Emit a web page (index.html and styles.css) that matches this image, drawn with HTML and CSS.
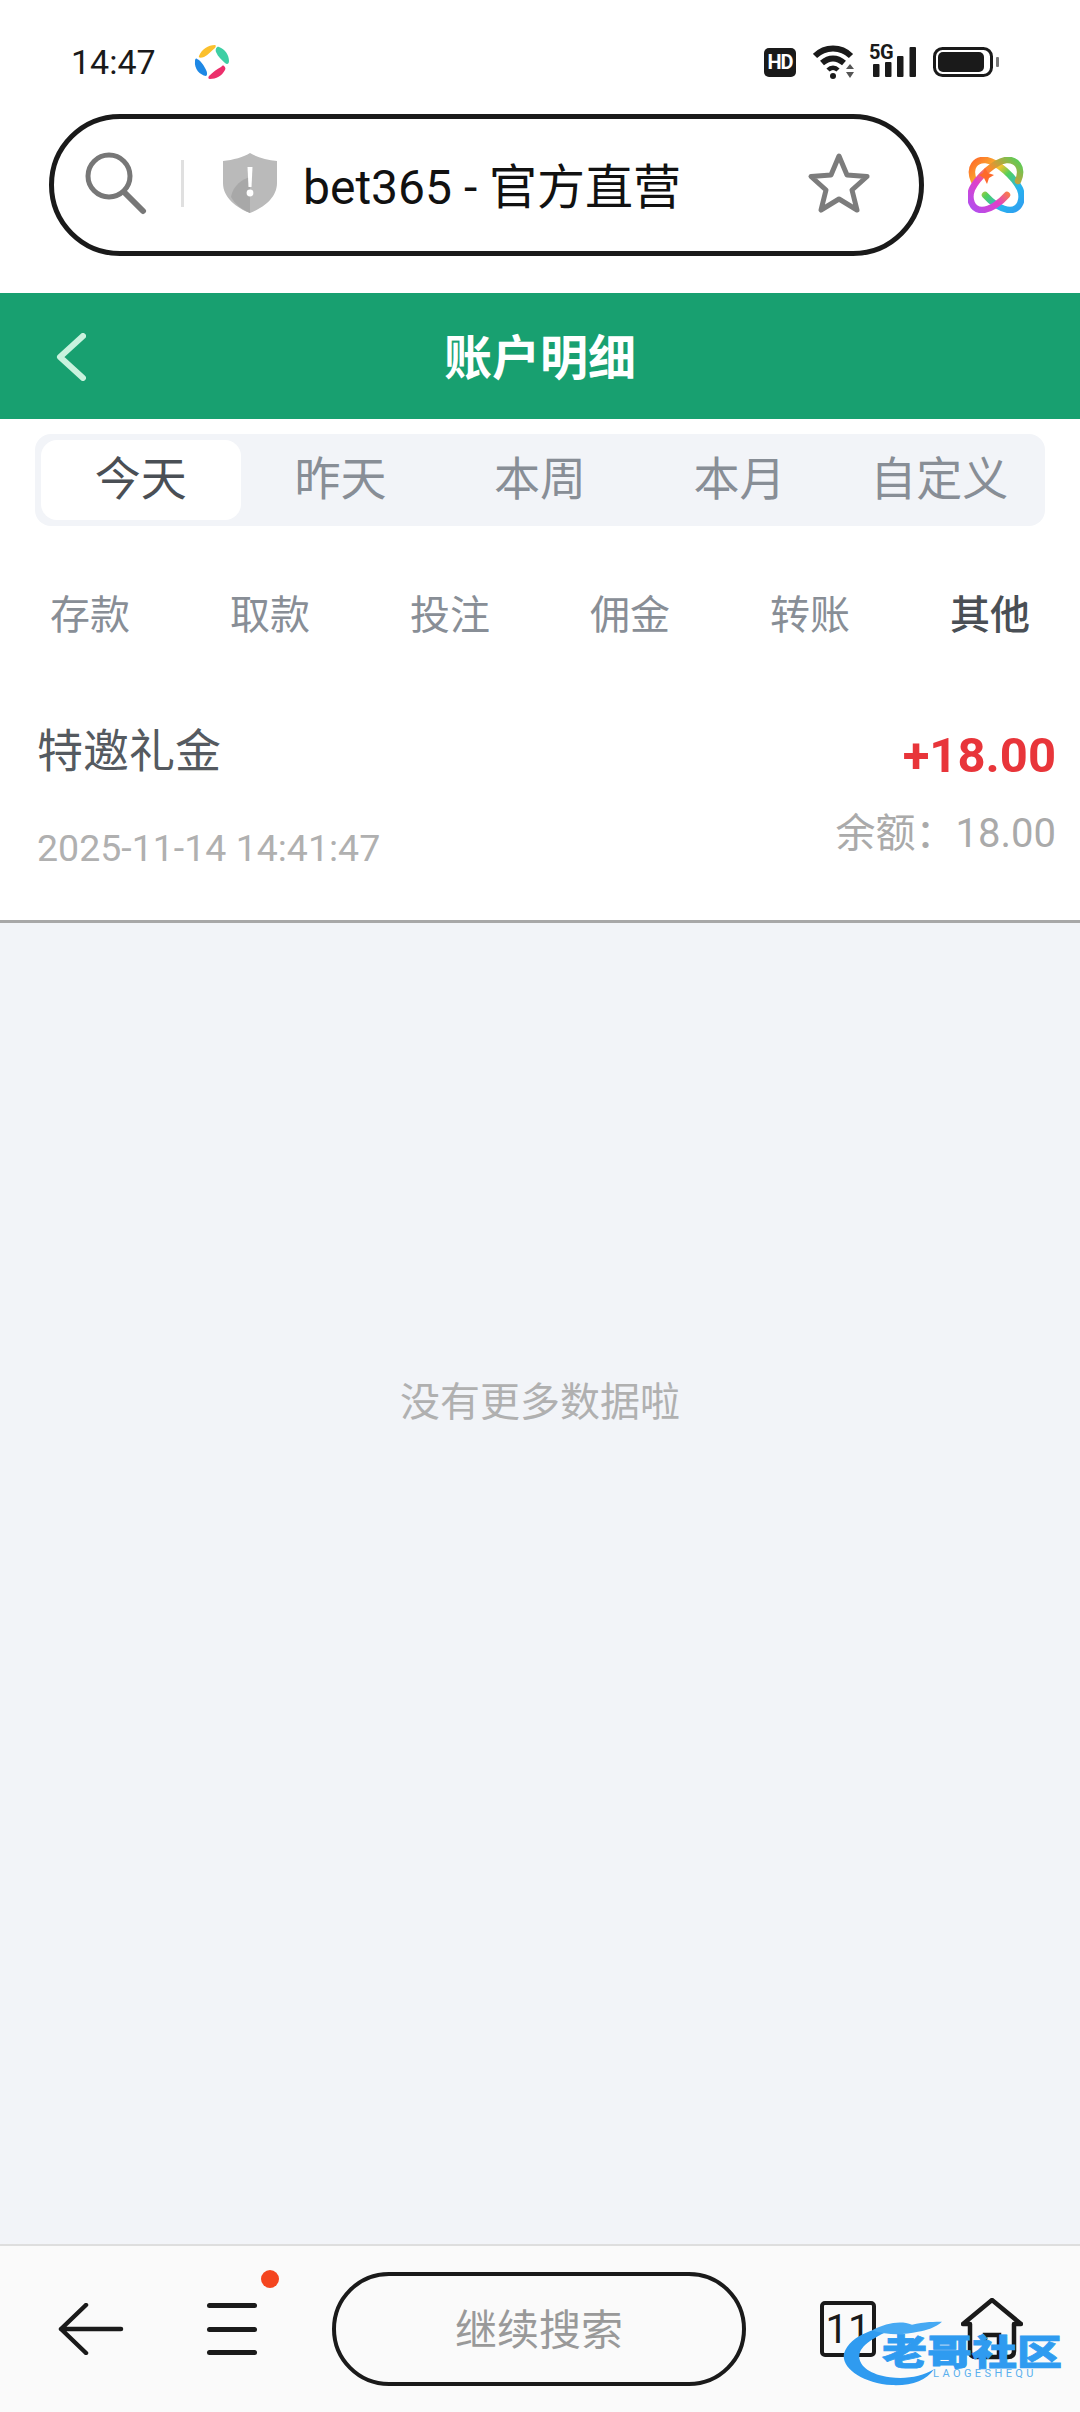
FILE: index.html
```html
<!DOCTYPE html>
<html lang="en">
<head>
    <meta charset="UTF-8">
    <meta name="viewport" content="width=device-width, initial-scale=1.0">
    <title>账户明细</title>
    <link rel="stylesheet" href="styles.css">
</head>
<body>

    <!-- Status Bar -->
    <div class="status-bar">
        <span class="time">14:47</span>
        <svg class="app-dot" viewBox="0 0 36 36">
            <path d="M5 12C8 5 14 1 21 1c1 0 1 2 0 3-4 3-7 7-11 9-3 1-6 1-5-1z" fill="#fbc02d"/>
            <path d="M25 3c6 2 10 8 10 14 0 3-2 4-4 2-3-3-7-6-9-11-1-3 1-6 3-5z" fill="#3ecfa4"/>
            <path d="M3 15c3 1 6 5 8 9 2 3 3 7 1 8C6 31 0 25 1 17c0-2 1-3 2-2z" fill="#1e88e5"/>
            <path d="M30 22c1 1 2 2 1 4-3 6-9 9-15 9-2 0-2-2-1-3 4-4 8-7 12-9 1-1 2-2 3-1z" fill="#ec2f6b"/>
        </svg>
        <div class="status-icons">
            <span class="hd">HD</span>
            <svg class="wifi" viewBox="0 0 44 34">
                <path d="M2 11C12 1 28 1 38 11" fill="none" stroke="#1a1a1a" stroke-width="6"/>
                <path d="M9 18c7-6 15-6 22 0" fill="none" stroke="#1a1a1a" stroke-width="6"/>
                <path d="M15 25c3-3 7-3 10 0" fill="none" stroke="#1a1a1a" stroke-width="4.500"/>
                <circle cx="20" cy="31" r="3" fill="#1a1a1a"/>
                <path d="M33 24l4-5 4 5zM33 27h8l-4 6z" fill="#555"/>
            </svg>
            <div class="signal">
                <span class="five-g">5G</span>
                <svg viewBox="0 0 43 30">
                    <rect x="0" y="17" width="6.500" height="13" rx="1"/>
                    <rect x="12" y="15" width="6.500" height="15" rx="1"/>
                    <rect x="24" y="9" width="6.500" height="21" rx="1"/>
                    <rect x="36.500" y="0" width="6.500" height="30" rx="1"/>
                </svg>
            </div>
            <svg class="battery" viewBox="0 0 66 30">
                <rect x="1.500" y="1.500" width="57" height="27" rx="8" fill="none" stroke="#1a1a1a" stroke-width="3"/>
                <rect x="5" y="5" width="46" height="20" rx="5" fill="#1a1a1a"/>
                <rect x="63" y="10" width="3" height="10" rx="1" fill="#777"/>
            </svg>
        </div>
    </div>

    <!-- Browser Address Bar -->
    <div class="browser-bar">
        <div class="address">
            <svg class="search-icon" viewBox="0 0 64 64">
                <circle cx="26" cy="25" r="21" fill="none" stroke="#777" stroke-width="5"/>
                <path d="M41 41L60 60" stroke="#777" stroke-width="6" stroke-linecap="round"/>
            </svg>
            <span class="address-sep"></span>
            <svg class="shield" viewBox="0 0 54 60">
                <path d="M27 0C33 4 44 7 54 8V30C54 45 40 55 27 60 14 55 0 45 0 30V8C10 7 21 4 27 0z" fill="#bababa"/>
                <path d="M8 44C10 32 20 26 27 24V60C18 56 12 51 8 44z" fill="#a8a8a8"/>
                <path d="M24.500 14h5l-1 20h-3z" fill="#fff"/>
                <circle cx="27" cy="40" r="3.400" fill="#fff"/>
            </svg>
            <span class="address-text">bet365 - 官方直营</span>
            <svg class="star" viewBox="0 0 64 62">
                <path d="M32 4L40 23 60 24.500 45 38 50 58 32 47 14 58 19 38 4 24.500 24 23z" fill="none" stroke="#7c7c7c" stroke-width="5" stroke-linejoin="round"/>
            </svg>
        </div>
        <svg class="orbit" viewBox="0 0 56 56">
            <defs>
                <linearGradient id="orbitGrad" x1="0" y1="0" x2="1" y2="1">
                    <stop offset="0" stop-color="#ff6a2b"/>
                    <stop offset="0.35" stop-color="#f7c32e"/>
                    <stop offset="0.5" stop-color="#52d05a"/>
                    <stop offset="0.75" stop-color="#27b4ee"/>
                    <stop offset="1" stop-color="#2f9df0"/>
                </linearGradient>
                <linearGradient id="orbitGrad2" x1="0" y1="1" x2="1" y2="0">
                    <stop offset="0" stop-color="#b050f0"/>
                    <stop offset="0.35" stop-color="#e040c8"/>
                    <stop offset="0.6" stop-color="#ff8a2b"/>
                    <stop offset="1" stop-color="#52d05a"/>
                </linearGradient>
            </defs>
            <path d="M6 24C0 10 8 2 18 3 30 5 46 20 52 32 56 42 52 53 42 53 34 53 24 46 17 38" fill="none" stroke="url(#orbitGrad)" stroke-width="6.500" stroke-linecap="round"/>
            <path d="M50 24C56 10 48 2 38 3 26 5 10 20 4 32 0 42 4 53 14 53 22 53 32 46 39 38" fill="none" stroke="url(#orbitGrad2)" stroke-width="6.500" stroke-linecap="round"/>
            <path d="M17 11L20 16 26 18 21 21 19 27 16 21 11 18 15 16z" fill="#ff6a2b"/>
        </svg>
    </div>

    <!-- Page Header -->
    <header class="page-header">
        <svg class="back-chevron" viewBox="0 0 30 48">
            <path d="M27 3L4 24 27 45" fill="none" stroke="#c9f2de" stroke-width="6" stroke-linecap="round" stroke-linejoin="round"/>
        </svg>
        <h1>账户明细</h1>
    </header>

    <!-- Date Range -->
    <div class="range-tabs">
        <div class="range-tab active">今天</div>
        <div class="range-tab">昨天</div>
        <div class="range-tab">本周</div>
        <div class="range-tab">本月</div>
        <div class="range-tab">自定义</div>
    </div>

    <!-- Type Filter -->
    <div class="type-tabs">
        <div class="type-tab">存款</div>
        <div class="type-tab">取款</div>
        <div class="type-tab">投注</div>
        <div class="type-tab">佣金</div>
        <div class="type-tab">转账</div>
        <div class="type-tab active">其他</div>
    </div>

    <!-- Record -->
    <div class="record">
        <div class="record-left">
            <div class="record-title">特邀礼金</div>
            <div class="record-date">2025-11-14 14:41:47</div>
        </div>
        <div class="record-right">
            <div class="record-amount">+18.00</div>
            <div class="record-balance">余额：18.00</div>
        </div>
    </div>

    <main class="empty-area">
        <p>没有更多数据啦</p>
    </main>

    <!-- Browser Bottom Bar -->
    <nav class="bottom-bar">
        <svg class="nav-back" viewBox="0 0 66 52">
            <path d="M28 2L3 26 28 50M3 26H63" fill="none" stroke="#1a1a1a" stroke-width="4.500" stroke-linecap="round" stroke-linejoin="round"/>
        </svg>
        <div class="nav-menu">
            <span></span>
            <span></span>
            <span></span>
            <i class="menu-dot"></i>
        </div>
        <div class="continue-pill">继续搜索</div>
        <div class="tab-count">11</div>
        <svg class="nav-home" viewBox="0 0 62 62">
            <path d="M2 26L31 2 60 26H53V53Q53 59 47 59H15Q9 59 9 53V26z" fill="none" stroke="#1a1a1a" stroke-width="4.500" stroke-linejoin="round"/>
            <path d="M24 59V37H38V59" fill="none" stroke="#1a1a1a" stroke-width="4.500"/>
        </svg>
    </nav>

    <!-- Watermark over the bottom bar -->
    <div class="watermark">
        <svg class="watermark-mark" viewBox="0 0 100 100" preserveAspectRatio="none">
            <path d="M60 12C36 14 8 26 2 52 -1 72 20 93 50 96 70 97 84 90 92 74 80 84 64 88 48 85 26 81 14 66 18 50 22 36 40 24 60 12z" fill="#2f9bf0"/>
            <path d="M30 20C44 10 58 6 70 12 82 8 94 8 100 8 94 16 84 20 76 22 60 27 44 26 30 20z" fill="#46a9f3"/>
        </svg>
        <div class="watermark-name">老哥社区</div>
        <div class="watermark-sub">LAOGESHEQU</div>
    </div>

</body>
</html>
```

FILE: styles.css
```css
/* Basic Reset */
body {
    margin: 0;
    width: 1080px;
    height: 2412px;
    overflow: hidden;
    position: relative;
    display: flex;
    flex-direction: column;
    background-color: #fff;
    font-family: Roboto, "Noto Sans CJK SC", sans-serif;
}

/* Status Bar */
.status-bar {
    height: 114px;
    padding: 10px 0 0 71px;
    box-sizing: border-box;
    display: flex;
    align-items: center;
    flex-shrink: 0;
}

.time {
    font-size: 34px;
    color: #1a1a1a;
}

.app-dot {
    width: 36px;
    height: 36px;
    margin-left: 38px;
}

.status-icons {
    margin-left: auto;
    margin-right: 81px;
    display: flex;
    align-items: center;
}

.hd {
    width: 32px;
    height: 29px;
    border-radius: 5px;
    background-color: #1a1a1a;
    color: #fff;
    font-size: 20px;
    font-weight: 700;
    letter-spacing: -1px;
    line-height: 29px;
    text-align: center;
}

.wifi {
    width: 44px;
    height: 34px;
    margin-left: 17px;
}

.signal {
    position: relative;
    width: 43px;
    height: 30px;
    margin-left: 16px;
}

.signal svg {
    display: block;
    width: 43px;
    height: 30px;
    fill: #1a1a1a;
}

.five-g {
    position: absolute;
    left: -4px;
    top: -5px;
    font-size: 20px;
    font-weight: 700;
    line-height: 20px;
    letter-spacing: -0.5px;
    color: #1a1a1a;
}

.battery {
    width: 66px;
    height: 30px;
    margin-left: 17px;
}

/* Browser Address Bar */
.browser-bar {
    height: 179px;
    padding-left: 49px;
    box-sizing: border-box;
    display: flex;
    flex-shrink: 0;
}

.address {
    width: 875px;
    height: 142px;
    box-sizing: border-box;
    border: 5px solid #1a1a1a;
    border-radius: 71px;
    padding: 0 0 4px 29px;
    display: flex;
    align-items: center;
}

.search-icon {
    width: 64px;
    height: 64px;
}

.address-sep {
    width: 3px;
    height: 47px;
    margin-left: 34px;
    background-color: #e0e0e0;
}

.shield {
    width: 54px;
    height: 60px;
    margin-left: 39px;
}

.address-text {
    margin-left: 26px;
    font-size: 48px;
    color: #111;
    white-space: nowrap;
}

.star {
    width: 64px;
    height: 62px;
    margin-left: auto;
    margin-right: 48px;
}

.orbit {
    width: 56px;
    height: 56px;
    margin: 43px 0 0 44px;
}

/* Page Header */
.page-header {
    height: 126px;
    flex-shrink: 0;
    background-color: #18a070;
    display: flex;
    align-items: center;
    justify-content: center;
    position: relative;
}

.page-header h1 {
    margin: 0 0 4px;
    font-size: 48px;
    font-weight: 700;
    color: #fff;
}

.back-chevron {
    position: absolute;
    left: 56px;
    top: 40px;
    width: 30px;
    height: 48px;
}

/* Date Range */
.range-tabs {
    margin: 15px 35px 0;
    height: 92px;
    padding: 6px;
    box-sizing: border-box;
    border-radius: 16px;
    background-color: #f2f4f8;
    display: flex;
    flex-shrink: 0;
}

.range-tab {
    flex: 1;
    border-radius: 16px;
    font-size: 46px;
    line-height: 78px;
    text-align: center;
    color: #888e96;
}

.range-tab.active {
    background-color: #fff;
    color: #4a4f55;
}

/* Type Filter */
.type-tabs {
    height: 176px;
    padding-bottom: 5px;
    box-sizing: border-box;
    display: flex;
    align-items: center;
    flex-shrink: 0;
}

.type-tab {
    flex: 1;
    font-size: 40px;
    text-align: center;
    color: #888e96;
}

.type-tab.active {
    color: #4a4f55;
    font-weight: 500;
}

/* Record */
.record {
    height: 221px;
    box-sizing: border-box;
    border-bottom: 3px solid #a8a8a8;
    padding: 20px 24px 0 37px;
    display: flex;
    justify-content: space-between;
    flex-shrink: 0;
}

.record-title {
    font-size: 46px;
    line-height: 58px;
    color: #555a60;
}

.record-date {
    margin-top: 46px;
    font-size: 37.500px;
    line-height: 44px;
    color: #b0b0b0;
}

.record-right {
    padding-top: 4px;
    text-align: right;
}

.record-amount {
    font-size: 49px;
    font-weight: 700;
    line-height: 60px;
    color: #e8353a;
}

.record-balance {
    margin-top: 25px;
    font-size: 40px;
    line-height: 46px;
    color: #aaa;
}

/* Empty Area */
.empty-area {
    flex: 1;
    background-color: #f2f4f8;
    padding-top: 452px;
}

.empty-area p {
    margin: 0;
    font-size: 40px;
    line-height: 56px;
    text-align: center;
    color: #b0b0b0;
}

/* Browser Bottom Bar */
.bottom-bar {
    height: 168px;
    box-sizing: border-box;
    border-top: 2px solid #dedede;
    background-color: #fafafa;
    padding-left: 58px;
    display: flex;
    align-items: center;
    flex-shrink: 0;
}

.nav-back {
    width: 66px;
    height: 52px;
}

.nav-menu {
    position: relative;
    width: 50px;
    height: 52px;
    margin-left: 83px;
    display: flex;
    flex-direction: column;
    justify-content: space-between;
}

.nav-menu span {
    height: 5px;
    border-radius: 3px;
    background-color: #1a1a1a;
}

.menu-dot {
    position: absolute;
    left: 54px;
    top: -33px;
    width: 18px;
    height: 18px;
    border-radius: 50%;
    background-color: #f4451f;
}

.continue-pill {
    width: 414px;
    height: 114px;
    margin-left: 75px;
    box-sizing: border-box;
    border: 4px solid #1a1a1a;
    border-radius: 57px;
    font-size: 42px;
    line-height: 110px;
    text-align: center;
    color: #999;
}

.tab-count {
    width: 56px;
    height: 56px;
    margin-left: 74px;
    box-sizing: border-box;
    border: 4px solid #1a1a1a;
    border-radius: 5px;
    font-size: 40px;
    line-height: 50px;
    text-align: center;
    color: #1a1a1a;
}

.nav-home {
    width: 62px;
    height: 62px;
    margin-left: 85px;
}

/* Watermark */
.watermark {
    position: absolute;
    left: 842px;
    top: 2316px;
    width: 230px;
    height: 76px;
}

.watermark-mark {
    position: absolute;
    left: 0;
    top: 0;
    width: 100px;
    height: 72px;
}

.watermark-name {
    position: absolute;
    left: 40px;
    top: 17px;
    width: 190px;
    font-size: 45px;
    font-weight: 900;
    line-height: 40px;
    white-space: nowrap;
    color: #2f9bf0;
    -webkit-text-stroke: 1px #2f9bf0;
    transform: scaleY(0.78);
}

.watermark-sub {
    position: absolute;
    left: 91px;
    top: 52px;
    font-size: 11px;
    line-height: 12px;
    letter-spacing: 3.400px;
    color: #5ab0ee;
}
```
